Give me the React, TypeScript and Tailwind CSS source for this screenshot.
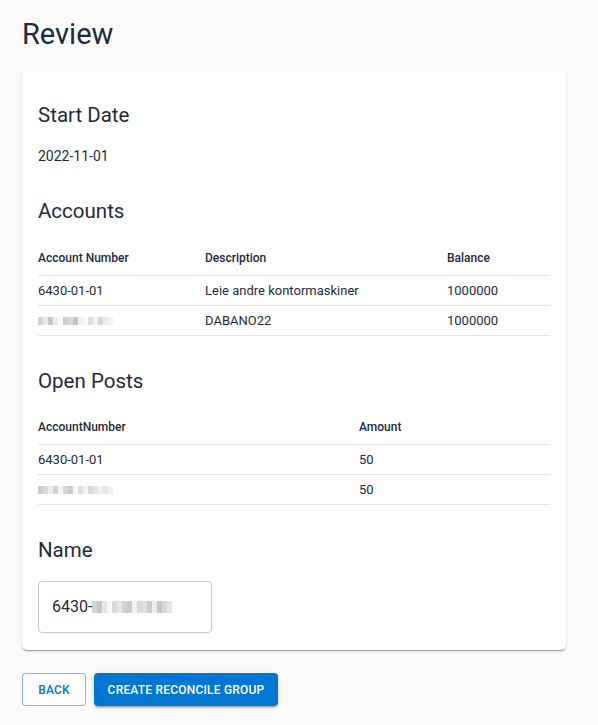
const ink = "text-[#1f2a3c]";

const Redacted = ({ cells, h = "h-[8px]" }: { cells: number[]; h?: string }) => (
  <span className={`inline-flex ${h} items-stretch align-middle`}>
    {cells.map((o, i) => (
      <span key={i} className="w-[5px]" style={{ backgroundColor: `rgba(120,128,140,${o})` }} />
    ))}
  </span>
);

const Row = ({ cols, head, children }: { cols: string; head?: boolean; children: React.ReactNode }) => (
  <div className={`grid ${cols} ${head ? "h-[36px]" : "h-[30px]"} items-center border-b border-[#e2e4e8] text-[13px]`}>
    {children}
  </div>
);

const Th = ({ children }: { children: React.ReactNode }) => (
  <span className="text-[12px] font-medium">{children}</span>
);

export default function App() {
  const accCols = "grid-cols-[167px_242px_1fr]";
  const postCols = "grid-cols-[321px_1fr]";
  return (
    <div className={`min-h-[725px] bg-[#fafafa] px-[22px] pt-[16px] font-['Roboto',sans-serif] ${ink}`}>
      <h1 className="text-[29px] leading-[36px] font-normal">Review</h1>

      <div className="mt-[19px] w-[544px] rounded-[5px] bg-white px-4 pt-[30px] pb-[17px] shadow-[0_2px_1px_-1px_rgba(0,0,0,0.2),0_1px_1px_0_rgba(0,0,0,0.14),0_1px_3px_0_rgba(0,0,0,0.12)]">
        <h2 className="text-[20.5px] leading-[28px]">Start Date</h2>
        <p className="mt-[17px] text-[14px] leading-[20px]">2022-11-01</p>

        <h2 className="mt-[31px] text-[20.5px] leading-[28px]">Accounts</h2>
        <div className="mt-[15px]">
          <Row cols={accCols} head>
            <Th>Account Number</Th>
            <Th>Description</Th>
            <Th>Balance</Th>
          </Row>
          <Row cols={accCols}>
            <span>6430-01-01</span>
            <span>Leie andre kontormaskiner</span>
            <span>1000000</span>
          </Row>
          <Row cols={accCols}>
            <span>
              <Redacted cells={[0.35, 0.2, 0.45, 0.15, 0.05, 0.4, 0.3, 0.45, 0.1, 0.05, 0.25, 0.1, 0.35, 0.15, 0.1]} />
            </span>
            <span>DABANO22</span>
            <span>1000000</span>
          </Row>
        </div>

        <h2 className="mt-[31px] text-[20.5px] leading-[28px]">Open Posts</h2>
        <div className="mt-[14px]">
          <Row cols={postCols} head>
            <Th>AccountNumber</Th>
            <Th>Amount</Th>
          </Row>
          <Row cols={postCols}>
            <span>6430-01-01</span>
            <span>50</span>
          </Row>
          <Row cols={postCols}>
            <span>
              <Redacted cells={[0.4, 0.3, 0.15, 0.35, 0.1, 0.3, 0.4, 0.05, 0.25, 0.1, 0.3, 0.2, 0.1, 0.2, 0.1]} />
            </span>
            <span>50</span>
          </Row>
        </div>

        <h2 className="mt-[31px] text-[20.5px] leading-[28px]">Name</h2>
        <div className="mt-[17px] flex h-[52px] w-[174px] items-center rounded-[4px] border border-[#c4c6ca] px-[13px] text-[16px]">
          <span>6430-</span>
          <Redacted h="h-[12px]" cells={[0.35, 0.45, 0.2, 0.05, 0.3, 0.2, 0.35, 0.4, 0.1, 0.3, 0.25, 0.4, 0.15, 0.45, 0.3, 0.2]} />
        </div>
      </div>

      <div className="mt-[23px] flex gap-2">
        <button className="h-[33px] w-[64px] rounded-[4px] border border-[#0176d3]/50 bg-white text-[12px] font-medium tracking-[0.2px] text-[#0176d3]">
          BACK
        </button>
        <button className="h-[33px] w-[184px] rounded-[4px] bg-[#0176d3] text-[12px] font-medium tracking-[0.2px] text-white shadow-[0_3px_1px_-2px_rgba(0,0,0,0.2),0_2px_2px_0_rgba(0,0,0,0.14),0_1px_5px_0_rgba(0,0,0,0.12)]">
          CREATE RECONCILE GROUP
        </button>
      </div>
    </div>
  );
}
